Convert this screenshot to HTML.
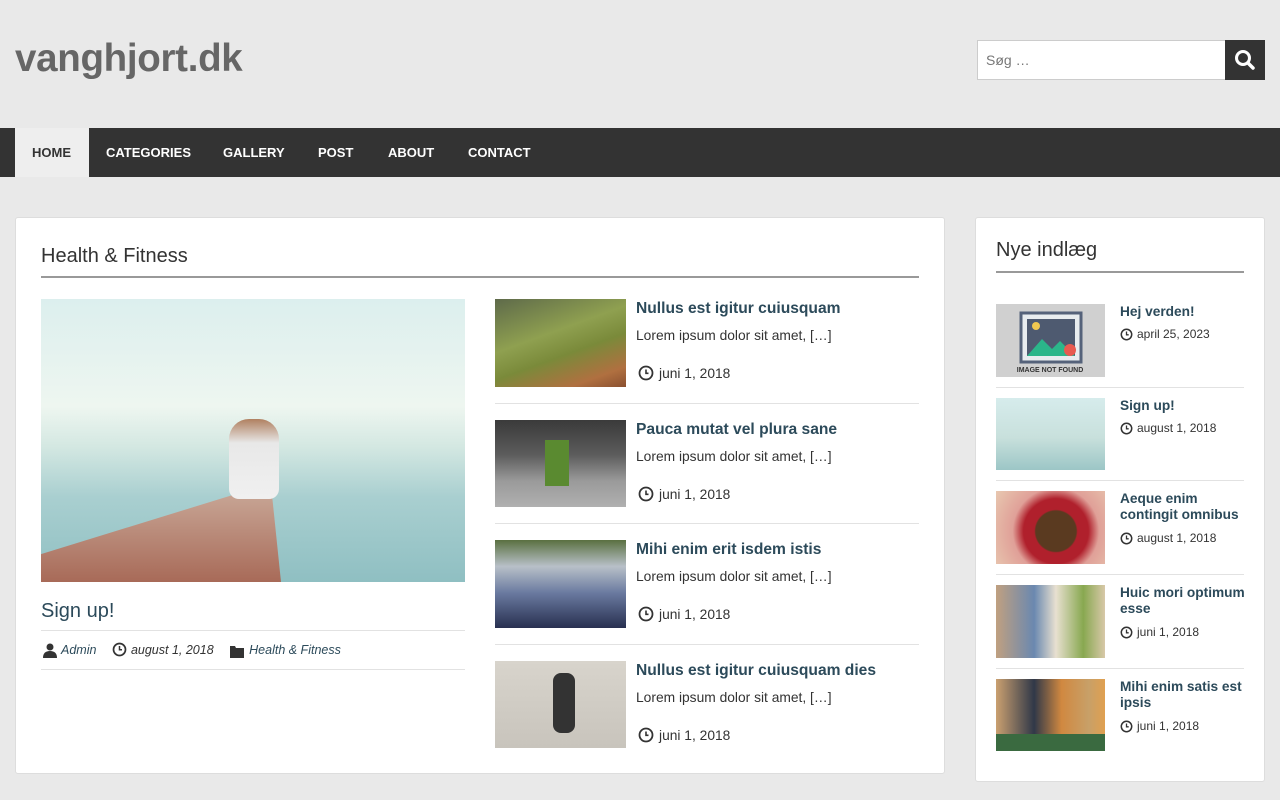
<!DOCTYPE html>
<html><head><meta charset="utf-8">
<style>
*{margin:0;padding:0;box-sizing:border-box}
body{width:1280px;height:800px;background:#e9e9e9;font-family:"Liberation Sans",sans-serif;position:relative;overflow:hidden;color:#333}
.a{position:absolute}
.t{font-weight:bold;color:#2c4a5a}
.nav span{position:absolute;top:0;height:49px;line-height:49px;color:#fff;font-weight:bold;font-size:13px}
.clk{display:inline-block;vertical-align:-3px;margin-right:5px}
.sep{position:absolute;height:1px;background:#e2e2e2}
.rt{font-size:15.6px}
.ex{font-size:13.8px}
</style></head><body>
<div class="a" style="left:15px;top:37px;font-size:38.5px;font-weight:bold;color:#666;letter-spacing:-0.3px">vanghjort.dk</div>
<div class="a" style="left:977px;top:40px;width:249px;height:40px;background:#fff;border:1px solid #ccc;font-size:14px;color:#777;padding:11px 8px">Søg …</div>
<div class="a" style="left:1225px;top:40px;width:40px;height:40px;background:#333">
<svg width="40" height="40"><circle cx="18" cy="18" r="6.5" fill="none" stroke="#fff" stroke-width="3"/><line x1="23" y1="23" x2="28" y2="28" stroke="#fff" stroke-width="3.5" stroke-linecap="round"/></svg></div>
<div class="a nav" style="left:0;top:128px;width:1280px;height:49px;background:#333">
<div class="a" style="left:15px;top:0;width:74px;height:49px;background:#eee"></div>
<span style="left:32px;color:#333">HOME</span><span style="left:106px">CATEGORIES</span><span style="left:223px">GALLERY</span><span style="left:318px">POST</span><span style="left:388px">ABOUT</span><span style="left:468px">CONTACT</span>
</div>

<div class="a" style="left:15px;top:217px;width:930px;height:557px;background:#fff;border:1px solid #ddd;border-radius:3px"></div>
<div class="a" style="left:41px;top:245px;font-size:20px;color:#333">Health &amp; Fitness</div>
<div class="a" style="left:41px;top:276px;width:878px;height:2px;background:#999"></div>
<div class="a" style="left:41px;top:299px;width:424px;height:283px;overflow:hidden;background:linear-gradient(180deg,#dcefee 0%,#eef6f0 38%,#d4e8e2 52%,#a9cfd0 70%,#8fbfc2 100%)">
<div class="a" style="left:0;top:190px;width:240px;height:93px;background:linear-gradient(180deg,#c9a898,#a86a58);clip-path:polygon(88% 0,96% 0,100% 100%,0 100%,0 70%)"></div>
<div class="a" style="left:188px;top:120px;width:50px;height:80px;background:linear-gradient(180deg,#b08060 0%,#e8e8e8 30%,#f0f0f0 100%);border-radius:20px 20px 10px 10px"></div>
</div>
<div class="a t" style="left:41px;top:600px;font-size:20px;font-weight:normal;color:#2c4a5a">Sign up!</div>
<div class="sep" style="left:41px;top:630px;width:424px"></div>
<div class="a" style="left:41px;top:642px;font-size:12.5px;font-style:italic;color:#333;white-space:nowrap">
<svg width="17" height="16" style="vertical-align:-4px"><circle cx="9" cy="5" r="3.5" fill="#333"/><path d="M2 16 Q2 9 9 9 Q16 9 16 16Z" fill="#333"/></svg> <span style="color:#2c4a5a">Admin</span>
<span style="margin-left:12px"><svg class="clk" width="15" height="15" style="margin-right:4px"><circle cx="7.5" cy="7.5" r="6" fill="none" stroke="#333" stroke-width="1.7"/><path d="M7.5 4V7.8H10" fill="none" stroke="#333" stroke-width="1.5"/></svg>august 1, 2018</span>
<span style="margin-left:12px"><svg width="16" height="14" style="vertical-align:-4px;margin-right:4px"><path d="M1 2H6L7 4H15V14H1Z" fill="#333"/></svg><span style="color:#2c4a5a">Health &amp; Fitness</span></span>
</div>
<div class="sep" style="left:41px;top:669px;width:424px"></div>

<!-- right list -->
<div class="a" style="left:495px;top:299px;width:131px;height:88px;background:linear-gradient(160deg,#5e6a4a,#8fa050 40%,#7a8a3a 60%,#b07040 85%,#8a5030)"></div>
<div class="a" style="left:495px;top:420px;width:131px;height:87px;background:linear-gradient(180deg,#3a3a3a 0%,#5c5c5c 40%,#9a9a9a 70%,#b0b0b0 100%)"><div class="a" style="left:50px;top:20px;width:24px;height:46px;background:#5a8a30"></div></div>
<div class="a" style="left:495px;top:540px;width:131px;height:88px;background:linear-gradient(180deg,#5a7040 0%,#b8c0c8 30%,#6a7aa0 60%,#283050 100%)"></div>
<div class="a" style="left:495px;top:661px;width:131px;height:87px;background:linear-gradient(180deg,#d8d4cc,#c8c4bc)"><div class="a" style="left:58px;top:12px;width:22px;height:60px;background:#333;border-radius:8px"></div></div>

<div class="a t rt" style="left:636px;top:300px">Nullus est igitur cuiusquam</div>
<div class="a ex" style="left:636px;top:328px">Lorem ipsum dolor sit amet, […]</div>
<div class="a ex" style="left:638px;top:365px"><svg class="clk" width="16" height="16"><circle cx="8" cy="8" r="6.5" fill="none" stroke="#333" stroke-width="1.8"/><path d="M8 4.5V8.3H10.5" fill="none" stroke="#333" stroke-width="1.6"/></svg>juni 1, 2018</div>
<div class="sep" style="left:495px;top:403px;width:424px"></div>

<div class="a t rt" style="left:636px;top:421px">Pauca mutat vel plura sane</div>
<div class="a ex" style="left:636px;top:449px">Lorem ipsum dolor sit amet, […]</div>
<div class="a ex" style="left:638px;top:486px"><svg class="clk" width="16" height="16"><circle cx="8" cy="8" r="6.5" fill="none" stroke="#333" stroke-width="1.8"/><path d="M8 4.5V8.3H10.5" fill="none" stroke="#333" stroke-width="1.6"/></svg>juni 1, 2018</div>
<div class="sep" style="left:495px;top:523px;width:424px"></div>

<div class="a t rt" style="left:636px;top:541px">Mihi enim erit isdem istis</div>
<div class="a ex" style="left:636px;top:569px">Lorem ipsum dolor sit amet, […]</div>
<div class="a ex" style="left:638px;top:606px"><svg class="clk" width="16" height="16"><circle cx="8" cy="8" r="6.5" fill="none" stroke="#333" stroke-width="1.8"/><path d="M8 4.5V8.3H10.5" fill="none" stroke="#333" stroke-width="1.6"/></svg>juni 1, 2018</div>
<div class="sep" style="left:495px;top:644px;width:424px"></div>

<div class="a t rt" style="left:636px;top:662px">Nullus est igitur cuiusquam dies</div>
<div class="a ex" style="left:636px;top:690px">Lorem ipsum dolor sit amet, […]</div>
<div class="a ex" style="left:638px;top:727px"><svg class="clk" width="16" height="16"><circle cx="8" cy="8" r="6.5" fill="none" stroke="#333" stroke-width="1.8"/><path d="M8 4.5V8.3H10.5" fill="none" stroke="#333" stroke-width="1.6"/></svg>juni 1, 2018</div>

<!-- sidebar -->
<div class="a" style="left:975px;top:217px;width:290px;height:565px;background:#fff;border:1px solid #ddd;border-radius:3px"></div>
<div class="a" style="left:996px;top:239px;font-size:20px;color:#333">Nye indlæg</div>
<div class="a" style="left:996px;top:271px;width:248px;height:2px;background:#999"></div>

<div class="a" style="left:996px;top:304px;width:109px;height:73px;background:#d0d0d0">
<svg width="109" height="73"><rect x="25" y="9" width="60" height="49" fill="#e8ecef" stroke="#55627a" stroke-width="3"/><rect x="31" y="15" width="48" height="37" fill="#4e5a70"/><circle cx="40" cy="22" r="4" fill="#f0c850"/><path d="M31 52L46 35L56 45L64 37L79 52Z" fill="#2bb68a"/><circle cx="74" cy="46" r="6" fill="#e85a50"/><text x="54" y="68" font-size="7" font-weight="bold" text-anchor="middle" fill="#333" font-family="Liberation Sans">IMAGE NOT FOUND</text></svg></div>
<div class="a" style="left:996px;top:398px;width:109px;height:72px;background:linear-gradient(180deg,#d6ecec,#c8e0dc 55%,#9cc6c6)"></div>
<div class="a" style="left:996px;top:491px;width:109px;height:73px;background:radial-gradient(circle at 55% 55%,#5a3a20 0 28%,#b0202c 30% 45%,#e0a098 60%,#e8c8b0)"></div>
<div class="a" style="left:996px;top:585px;width:109px;height:73px;background:linear-gradient(90deg,#c0a080,#6a88b0 35%,#e8e0d0 55%,#88a850 80%,#d8c8a8)"></div>
<div class="a" style="left:996px;top:679px;width:109px;height:72px;background:linear-gradient(90deg,#caa070,#303848 35%,#d08840 60%,#c8a068 85%,#e0a050);"><div class="a" style="left:0;top:55px;width:109px;height:17px;background:#3a6a40"></div></div>

<div class="a t" style="left:1120px;top:304px;font-size:13.7px">Hej verden!</div>
<div class="a" style="left:1120px;top:327px;font-size:12px"><svg class="clk" width="13" height="13" style="margin-right:4px"><circle cx="6.5" cy="6.5" r="5.2" fill="none" stroke="#333" stroke-width="1.5"/><path d="M6.5 3.5V6.8H8.7" fill="none" stroke="#333" stroke-width="1.3"/></svg>april 25, 2023</div>
<div class="sep" style="left:996px;top:387px;width:248px"></div>

<div class="a t" style="left:1120px;top:398px;font-size:13.7px">Sign up!</div>
<div class="a" style="left:1120px;top:421px;font-size:12px"><svg class="clk" width="13" height="13" style="margin-right:4px"><circle cx="6.5" cy="6.5" r="5.2" fill="none" stroke="#333" stroke-width="1.5"/><path d="M6.5 3.5V6.8H8.7" fill="none" stroke="#333" stroke-width="1.3"/></svg>august 1, 2018</div>
<div class="sep" style="left:996px;top:480px;width:248px"></div>

<div class="a t" style="left:1120px;top:491px;font-size:13.7px;line-height:16px">Aeque enim<br>contingit omnibus</div>
<div class="a" style="left:1120px;top:531px;font-size:12px"><svg class="clk" width="13" height="13" style="margin-right:4px"><circle cx="6.5" cy="6.5" r="5.2" fill="none" stroke="#333" stroke-width="1.5"/><path d="M6.5 3.5V6.8H8.7" fill="none" stroke="#333" stroke-width="1.3"/></svg>august 1, 2018</div>
<div class="sep" style="left:996px;top:574px;width:248px"></div>

<div class="a t" style="left:1120px;top:585px;font-size:13.7px;line-height:16px">Huic mori optimum<br>esse</div>
<div class="a" style="left:1120px;top:625px;font-size:12px"><svg class="clk" width="13" height="13" style="margin-right:4px"><circle cx="6.5" cy="6.5" r="5.2" fill="none" stroke="#333" stroke-width="1.5"/><path d="M6.5 3.5V6.8H8.7" fill="none" stroke="#333" stroke-width="1.3"/></svg>juni 1, 2018</div>
<div class="sep" style="left:996px;top:668px;width:248px"></div>

<div class="a t" style="left:1120px;top:679px;font-size:13.7px;line-height:16px">Mihi enim satis est<br>ipsis</div>
<div class="a" style="left:1120px;top:719px;font-size:12px"><svg class="clk" width="13" height="13" style="margin-right:4px"><circle cx="6.5" cy="6.5" r="5.2" fill="none" stroke="#333" stroke-width="1.5"/><path d="M6.5 3.5V6.8H8.7" fill="none" stroke="#333" stroke-width="1.3"/></svg>juni 1, 2018</div>
</body></html>
